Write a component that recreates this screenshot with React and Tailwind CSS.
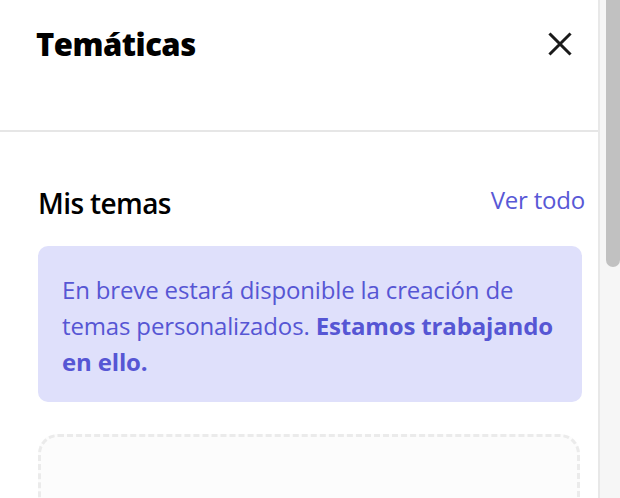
import React from 'react';

function CloseIcon() {
  return (
    <svg width="24" height="24" viewBox="0 0 24 24" fill="none" stroke="#1a1a1a" strokeWidth="3" strokeLinecap="square">
      <path d="M2.5 2.5L21.5 21.5M21.5 2.5L2.5 21.5" />
    </svg>
  );
}

function ThemesPanel() {
  return (
    <div className="flex-1 min-w-0 bg-white">
      <div className="h-[132px] border-b-2 border-[#e6e6e6] flex items-start justify-between pl-9 pr-[26px] pt-[24px]">
        <h1 className="text-[31px] font-extrabold text-black leading-[40px] tracking-[-0.5px]">Temáticas</h1>
        <button className="mt-[8px]">
          <CloseIcon />
        </button>
      </div>

      <div className="px-[38px] pt-[52px] pr-[13px]">
        <div className="flex items-end justify-between">
          <h2 className="text-[28px] font-semibold text-black leading-9 tracking-[-0.6px]">Mis temas</h2>
          <a href="#" className="text-[24px] text-[#5858d6] leading-8 mb-[5px] tracking-[-0.2px]">Ver todo</a>
        </div>

        <div className="mt-[25px] mr-[3px] rounded-[10px] bg-[#dfe0fb] px-6 pt-[26px] pb-[22px] text-[24px] leading-[36px] text-[#5656d4] tracking-[-0.15px]">
          En breve estará disponible la creación de temas personalizados.{' '}
          <span className="font-bold">Estamos trabajando en ello.</span>
        </div>

        <div className="mt-8 mr-[5px] h-[120px] rounded-[20px] border-[3px] border-dashed border-[#ebebeb] bg-[#fcfcfc]" />
      </div>
    </div>
  );
}

function Scrollbar() {
  return (
    <div className="w-[22px] shrink-0 border-l-2 border-[#e8e8e8] bg-[#f6f6f6] pl-[6px]">
      <div className="h-[267px] w-full rounded-b-[8px] bg-[#c1c1c1]" />
    </div>
  );
}

export default function App() {
  return (
    <div className="flex h-[498px] w-[620px] overflow-hidden" style={{ fontFamily: '"Open Sans", "Noto Sans", sans-serif' }}>
      <ThemesPanel />
      <Scrollbar />
    </div>
  );
}
